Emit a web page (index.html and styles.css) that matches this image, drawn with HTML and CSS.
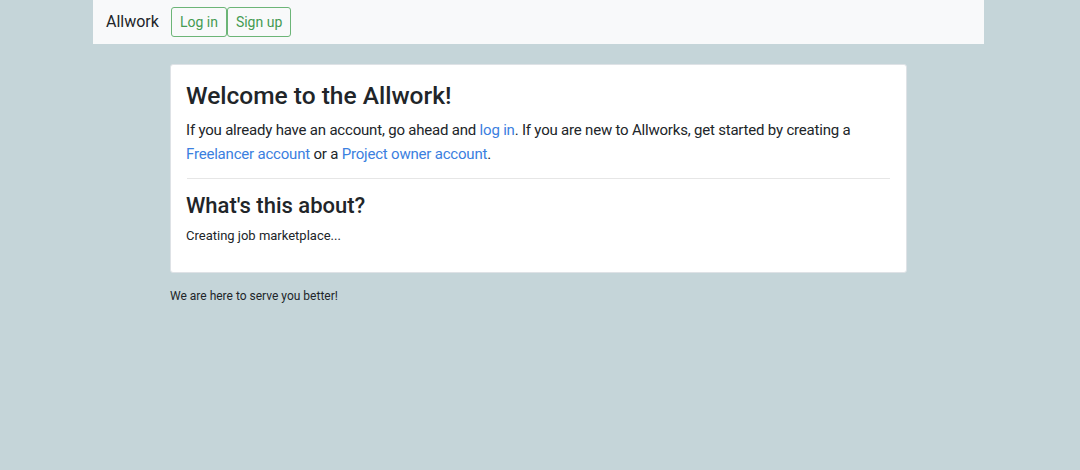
FILE: index.html
```html
<!DOCTYPE html>
<html>
<head>
<meta charset="utf-8">
<link rel="stylesheet" href="styles.css">
</head>
<body>
<nav class="navbar">
  <a class="brand" href="#">Allwork</a>
  <div class="nav-buttons">
    <a class="btn" href="#">Log in</a>
    <a class="btn" href="#">Sign up</a>
  </div>
</nav>
<main class="main">
  <section class="card">
    <h1 class="title">Welcome to the Allwork!</h1>
    <p class="lead">If you already have an account, go ahead and <a href="#">log in</a>. If you are new to Allworks, get started by creating a <a href="#">Freelancer account</a> or a <a href="#">Project owner account</a>.</p>
    <hr class="divider">
    <h2 class="subtitle">What's this about?</h2>
    <p class="small">Creating job marketplace...</p>
  </section>
  <p class="footer">We are here to serve you better!</p>
</main>
</body>
</html>
```
FILE: styles.css
```css
* { box-sizing: border-box; }
html, body { margin: 0; padding: 0; }
body {
  background: #c5d5d9;
  font-family: Roboto, "Noto Sans", "Liberation Sans", sans-serif;
  color: #212529;
  font-size: 16px;
  line-height: 1.5;
  padding-right: 3px;
}
a { text-decoration: none; }
.navbar {
  width: 891px;
  margin: 0 auto;
  height: 44px;
  background: #f8f9fa;
  display: flex;
  align-items: center;
  padding: 0 13px;
}
.brand {
  color: #212529;
  font-size: 16px;
  margin-right: 12px;
}
.nav-buttons { display: flex; }
.btn {
  display: inline-block;
  border: 1px solid #6cb577;
  color: #449b52;
  border-radius: 3px;
  font-size: 14px;
  line-height: 20px;
  padding: 4px 8px;
}
.main {
  width: 737px;
  margin: 20px auto 0;
}
.card {
  background: #fff;
  border: 1px solid #dee2e6;
  border-radius: 3px;
  padding: 16px 16px 27px 15px;
}
.title {
  font-size: 24.5px;
  font-weight: 500;
  line-height: 1.2;
  margin: 0 0 8px;
}
.lead {
  margin: 0 0 12px;
  font-size: 15px;
  line-height: 24px;
  letter-spacing: -0.2px;
}
.lead a { color: #3b80e0; }
.divider {
  border: 0;
  border-top: 1px solid #e6e6e6;
  margin: 0 0 14px 1px;
}
.subtitle {
  font-size: 22px;
  font-weight: 500;
  line-height: 1.2;
  margin: 0 0 6px;
}
.small {
  margin: 0;
  font-size: 13px;
}
.footer {
  margin: 14px 0 0;
  font-size: 12px;
}
```
